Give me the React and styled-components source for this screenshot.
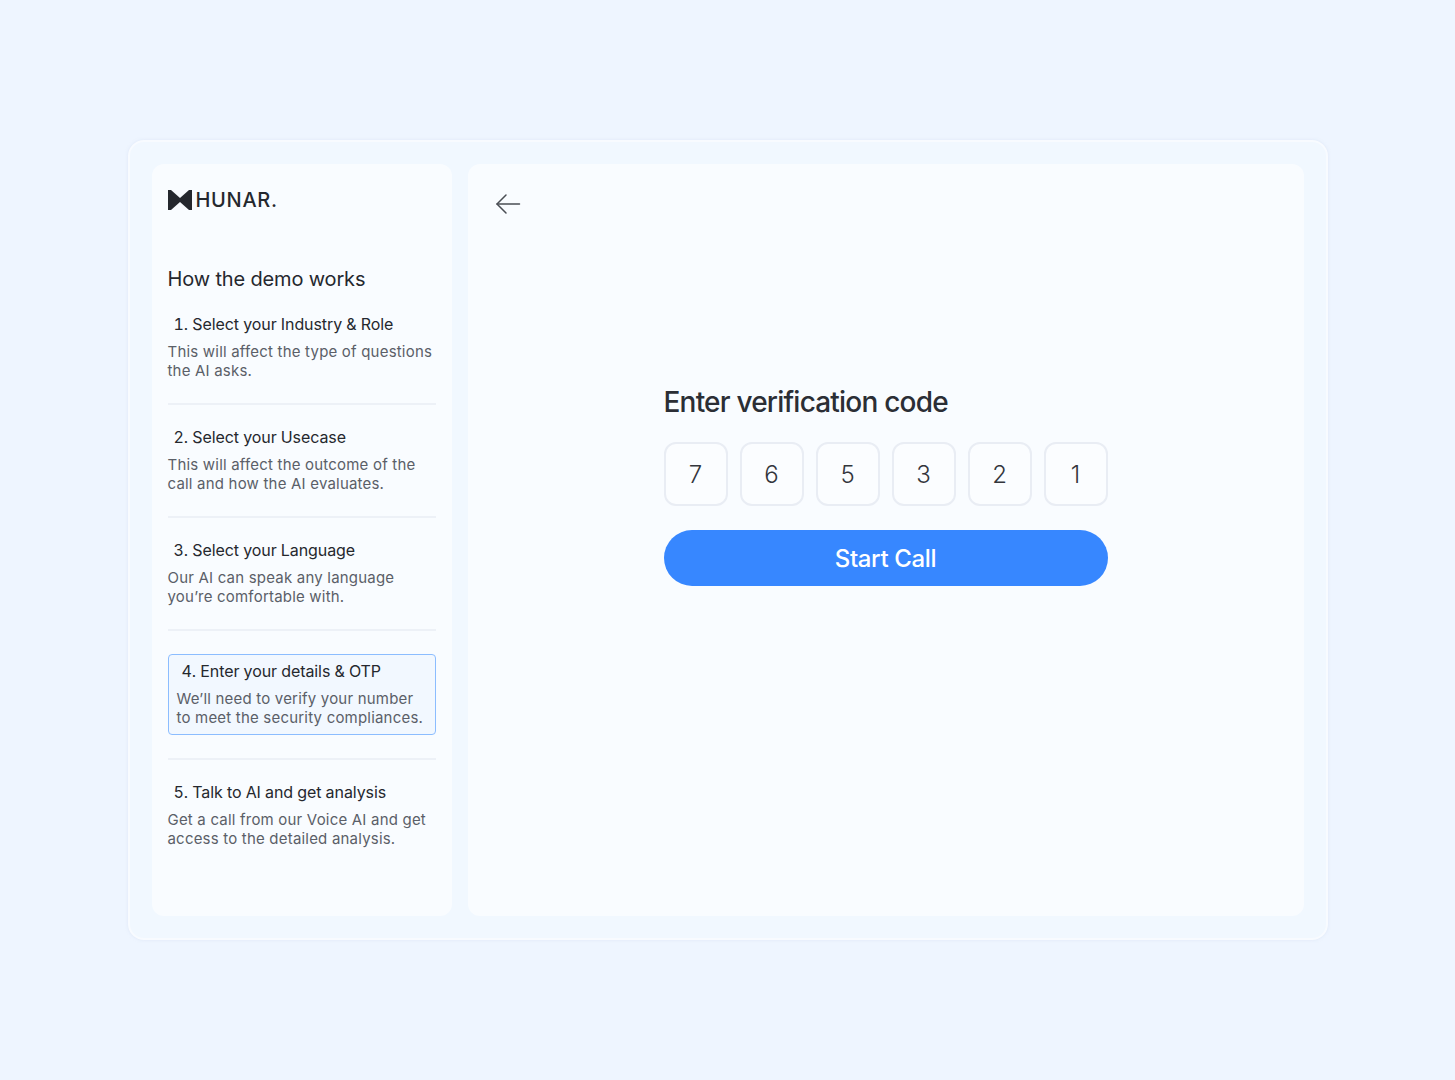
import React from 'react'
import styled, { createGlobalStyle } from 'styled-components'

const GlobalStyle = createGlobalStyle`
  html, body {
    margin: 0;
    padding: 0;
    background: #eef5ff;
    font-family: Inter, "Liberation Sans", sans-serif;
  }
`;

const Page = styled.div`
  height: 1080px;
  display: flex;
  align-items: center;
  justify-content: center;
`;

const Shell = styled.div`
  box-sizing: border-box;
  width: 1200px;
  height: 800px;
  padding: 22px;
  display: flex;
  gap: 16px;
  background: #f1f8ff;
  border: 2px solid #f8fbff;
  border-radius: 16px;
  box-shadow: 0 0 3px rgba(205, 218, 238, 0.5);
`;

const Sidebar = styled.aside`
  box-sizing: border-box;
  width: 300px;
  padding: 0 16px;
  background: #f9fcff;
  border-radius: 12px;
  display: flex;
  flex-direction: column;
`;

const LogoRow = styled.div`
  box-sizing: border-box;
  height: 72px;
  padding-top: 26px;
  display: flex;
  align-items: flex-start;
`;

const Wordmark = styled.span`
  margin-left: 4px;
  font-size: 20px;
  line-height: 20px;
  font-weight: 500;
  letter-spacing: 0.7px;
  color: #25282e;
`;

const Heading = styled.h2`
  margin: 31px 0 0;
  font-size: 20px;
  line-height: 24px;
  font-weight: 400;
  letter-spacing: -0.15px;
  color: #25282e;
`;

const Steps = styled.div`
  margin-top: 23px;
  display: flex;
  flex-direction: column;
`;

const Step = styled.div`
  box-sizing: border-box;
  ${p => p.$active && `
    height: 81px;
    padding: 6px 8px 7px;
    background: #f2f8ff;
    border: 1px solid #8cbdff;
    border-radius: 4px;
  `}
`;

const StepTitle = styled.div`
  font-size: 16px;
  line-height: 20px;
  letter-spacing: -0.08px;
  font-variant-numeric: tabular-nums;
  color: #25282e;
  padding-left: ${p => (p.$active ? '5px' : '6px')};
`;

const StepText = styled.p`
  margin: 8px 0 0;
  font-size: 15px;
  line-height: 19px;
  letter-spacing: 0.2px;
  color: #5b5f68;
`;

const Rule = styled.hr`
  width: 100%;
  height: 2px;
  margin: 23px 0 ${p => p.$after}px;
  border: 0;
  background: #edf1f7;
`;

const Main = styled.main`
  flex: 1;
  position: relative;
  background: #f9fcff;
  border-radius: 12px;
  display: flex;
  align-items: flex-start;
  justify-content: center;
`;

const BackButton = styled.button`
  position: absolute;
  top: 24px;
  left: 24px;
  width: 32px;
  height: 32px;
  padding: 0;
  display: flex;
  align-items: center;
  justify-content: center;
  background: none;
  border: 0;
  color: #4a4d54;
`;

const Form = styled.div`
  width: 444px;
  margin-top: 220px;
  display: flex;
  flex-direction: column;
`;

const Title = styled.h1`
  margin: 0;
  font-size: 28px;
  line-height: 36px;
  font-weight: 500;
  letter-spacing: -0.8px;
  color: #2b2e35;
`;

const Digits = styled.div`
  margin-top: 22px;
  display: flex;
  gap: 12px;
`;

const Digit = styled.div`
  box-sizing: border-box;
  width: 64px;
  height: 64px;
  display: flex;
  align-items: center;
  justify-content: center;
  background: #fbfdff;
  border: 2px solid #e9edf4;
  border-radius: 12px;
  font-size: 24px;
  font-weight: 300;
  color: #33363c;
`;

const StartButton = styled.button`
  margin-top: 24px;
  height: 56px;
  border: 0;
  border-radius: 28px;
  background: #3787ff;
  color: #ffffff;
  font-family: inherit;
  font-size: 24px;
  font-weight: 500;
  letter-spacing: -0.35px;
`;

const steps = [
  { title: '1. Select your Industry & Role', text: ['This will affect the type of questions', 'the AI asks.'] },
  { title: '2. Select your Usecase', text: ['This will affect the outcome of the', 'call and how the AI evaluates.'] },
  { title: '3. Select your Language', text: ['Our AI can speak any language', 'you’re comfortable with.'] },
  { title: '4. Enter your details & OTP', text: ['We’ll need to verify your number', 'to meet the security compliances.'], active: true },
  { title: '5. Talk to AI and get analysis', text: ['Get a call from our Voice AI and get', 'access to the detailed analysis.'] },
]

const digits = ['7', '6', '5', '3', '2', '1']

const Logo = () => (
  <svg width="24" height="20" viewBox="0 0 24 20" fill="#25282e">
    <path d="M0 0 H3 L12 8 L21 0 H24 V20 H21 L12 12 L3 20 H0 Z" />
  </svg>
)

export default function App() {
  return (
    <>
      <GlobalStyle />
      <Page>
        <Shell>
          <Sidebar>
            <LogoRow>
              <Logo />
              <Wordmark>HUNAR.</Wordmark>
            </LogoRow>
            <Heading>How the demo works</Heading>
            <Steps>
              {steps.map((step, i) => (
                <React.Fragment key={step.title}>
                  <Step $active={step.active}>
                    <StepTitle $active={step.active}>{step.title}</StepTitle>
                    <StepText>{step.text[0]}<br />{step.text[1]}</StepText>
                  </Step>
                  {i < steps.length - 1 && <Rule $after={steps[i + 1].active ? 23 : 22} />}
                </React.Fragment>
              ))}
            </Steps>
          </Sidebar>
          <Main>
            <BackButton aria-label="Back">
              <svg width="28" height="28" viewBox="0 0 28 28" fill="none" stroke="currentColor" strokeWidth="1.5" strokeLinecap="round" strokeLinejoin="round">
                <path d="M25.5 14H3" />
                <path d="M12 5 L3 14 L12 23" />
              </svg>
            </BackButton>
            <Form>
              <Title>Enter verification code</Title>
              <Digits>
                {digits.map((d, i) => <Digit key={i}>{d}</Digit>)}
              </Digits>
              <StartButton>Start Call</StartButton>
            </Form>
          </Main>
        </Shell>
      </Page>
    </>
  )
}
